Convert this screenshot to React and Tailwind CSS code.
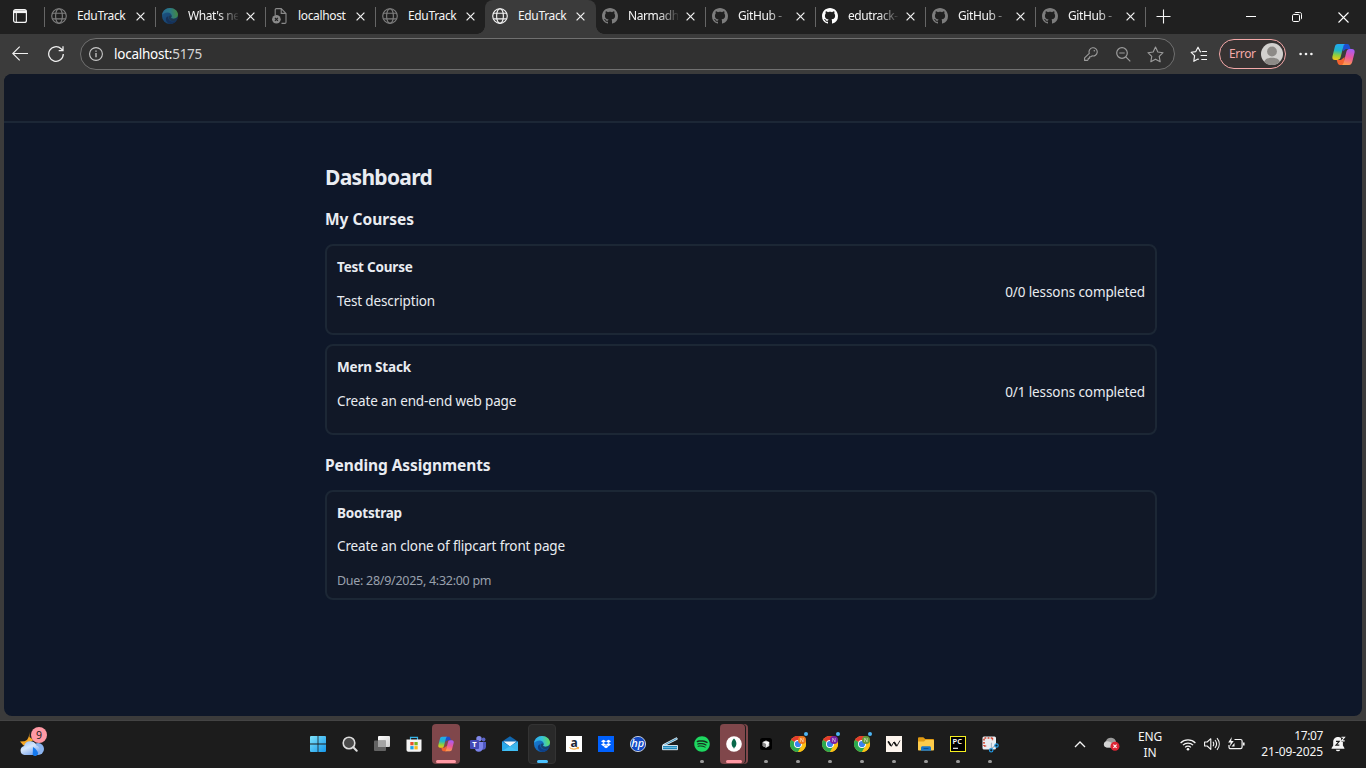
import React from "react";
import { FaDropbox, FaSpotify } from "react-icons/fa";

/* ---------- browser icons ---------- */

const Globe = ({ dim }) => (
  <svg width="16" height="16" viewBox="0 0 16 16" fill="none" stroke={dim ? "#7d7d7d" : "#f2f2f2"} strokeWidth="1.15">
    <circle cx="8" cy="8" r="7.3" />
    <ellipse cx="8" cy="8" rx="3.4" ry="7.3" />
    <path d="M1.3 5.2h13.4M1.3 10.8h13.4" />
  </svg>
);

const Github = ({ dim }) => (
  <svg width="16" height="16" viewBox="0 0 16 16" fill={dim ? "#7d7d7d" : "#ffffff"}>
    <path d="M8 0c4.42 0 8 3.58 8 8a8.013 8.013 0 0 1-5.45 7.59c-.4.08-.55-.17-.55-.38 0-.27.01-1.13.01-2.2 0-.75-.25-1.23-.54-1.48 1.78-.2 3.65-.88 3.65-3.95 0-.88-.31-1.59-.82-2.15.08-.2.36-1.02-.08-2.12 0 0-.67-.22-2.2.82-.64-.18-1.32-.27-2-.27-.68 0-1.36.09-2 .27-1.53-1.03-2.2-.82-2.2-.82-.44 1.1-.16 1.92-.08 2.12-.51.56-.82 1.28-.82 2.15 0 3.06 1.86 3.75 3.64 3.95-.23.2-.44.55-.51 1.07-.46.21-1.61.55-2.33-.66-.15-.24-.6-.83-1.23-.82-.67.01-.27.38.01.53.34.19.73.9.82 1.13.16.45.68 1.31 2.69.94 0 .67.01 1.3.01 1.49 0 .21-.15.45-.55.38A7.995 7.995 0 0 1 0 8c0-4.42 3.58-8 8-8Z" />
  </svg>
);

const Edge = ({ id, dim }) => (
  <svg width="16" height="16" viewBox="0 0 16 16" opacity={dim ? 0.55 : 1}>
    <defs>
      <linearGradient id={id + "a"} x1="0" y1="0.3" x2="1" y2="0.2">
        <stop offset="0" stopColor="#2ea8ee" />
        <stop offset="0.5" stopColor="#35c1d8" />
        <stop offset="1" stopColor="#66e04f" />
      </linearGradient>
      <linearGradient id={id + "b"} x1="0" y1="0" x2="1" y2="1">
        <stop offset="0" stopColor="#1b86dc" />
        <stop offset="1" stopColor="#0c4d9c" />
      </linearGradient>
    </defs>
    <circle cx="8" cy="8" r="8" fill={"url(#" + id + "b)"} />
    <path d="M0 7.4C.4 3.200 3.800 0 8 0c4.600 0 8 3.200 8 6.600 0 2.500-1.900 4.100-4.300 4.100-1.800 0-2.700-.7-2.700-1.100 0-.4.7-.6.700-1.700C9.700 6 7.800 4.600 5.600 4.600 2.800 4.600.5 6 0 7.400Z" fill={"url(#" + id + "a)"} />
    <path d="M6.200 8.200c-.6 3 1.600 5.400 4.800 5.400 1.500 0 3-.6 3.900-1.500-.8 1.700-3 3.600-6 3.800-3-.2-5-2.500-5-5 0-1.300.900-2.300 2.300-2.700Z" fill="#0e3f86" />
    <path d="M9.700 7.700c.1 1.100-.7 1.500-.7 1.900 0 .4.900 1.100 2.700 1.100 1.700 0 3.200-.8 3.900-2-.1 1.300-.4 2.200-.9 3-1 .9-2.300 1.300-3.600 1.300-2.900 0-4.800-2-4.400-4.500.6-.9 1.900-1.300 3-.8Z" fill={dim ? "#24384a" : "#1c2b3a"} opacity="0.55" />
  </svg>
);

const BrokenPage = () => (
  <svg width="16" height="16" viewBox="0 0 16 16" fill="none" stroke="#8a8a8a" strokeWidth="1.1">
    <path d="M3.200 7V1.700C3.200 1 3.700.6 4.300.6h4.900L14 5.400v8.900c0 .7-.5 1.100-1.100 1.100H9.500M9.200.6v4.800H14" />
    <circle cx="4.400" cy="11.300" r="4.300" fill="#8a8a8a" stroke="none" />
    <path d="m2.900 9.800 3 3m0-3-3 3" stroke="#202020" strokeWidth="1.200" />
  </svg>
);

const Close = () => (
  <svg width="9" height="9" viewBox="0 0 9 9" stroke="#f0f0f0" strokeWidth="1.250">
    <path d="m.6.6 7.800 7.800m0-7.800L.6 8.400" />
  </svg>
);

const Copilot = ({ id, size }) => (
  <svg width={size} height={size} viewBox="0 0 22 22">
    <defs>
      <linearGradient id={id + "l"} x1="0.4" y1="0" x2="0.3" y2="1">
        <stop offset="0" stopColor="#22a9f2" />
        <stop offset="0.4" stopColor="#20b5c8" />
        <stop offset="0.7" stopColor="#8fcf3c" />
        <stop offset="1" stopColor="#f5c518" />
      </linearGradient>
      <linearGradient id={id + "r"} x1="0.6" y1="0" x2="0.4" y2="1">
        <stop offset="0" stopColor="#a65cf5" />
        <stop offset="0.5" stopColor="#e9569f" />
        <stop offset="1" stopColor="#ff9a4a" />
      </linearGradient>
    </defs>
    <path d="M10 1h4.600c1.300 0 1.900.9 2.300 2l.8 2.800h-4.400L10.500 8Z" fill="#1d4fd0" />
    <path d="M12 21H7.600c-1.300 0-2-.8-2.300-2l-.8-2.800h4L12 13.500Z" fill="#f2622e" />
    <path d="M5.700 1h6.800c-1 .4-1.400 1.300-1.700 2.500L8.400 13c-.5 2-1.200 3.200-3.200 3.200H3c-2 0-3-1.200-2.600-3.400L2.600 4C3.100 2 3.900 1 5.700 1Z" fill={"url(#" + id + "l)"} />
    <path d="M16.300 21H9.500c1-.4 1.400-1.300 1.700-2.500L13.600 9c.5-2 1.200-3.200 3.200-3.200H19c2 0 3 1.200 2.600 3.400L19.400 18c-.5 2-1.300 3-3.100 3Z" fill={"url(#" + id + "r)"} />
  </svg>
);

const tabs = [
  { icon: <Globe dim />, title: "EduTrack" },
  { icon: <Edge id="et" dim />, title: "What's ne", fade: true },
  { icon: <BrokenPage />, title: "localhost" },
  { icon: <Globe dim />, title: "EduTrack" },
  { icon: <Globe />, title: "EduTrack", active: true },
  { icon: <Github dim />, title: "Narmadh", fade: true },
  { icon: <Github dim />, title: "GitHub -", fade: true },
  { icon: <Github />, title: "edutrack-", fade: true },
  { icon: <Github dim />, title: "GitHub -", fade: true },
  { icon: <Github dim />, title: "GitHub -", fade: true },
];

function Tab({ tab, line, first }) {
  const box = tab.active ? "-ml-px w-[111px] rounded-t-lg bg-[#3b3b3b] pl-[7px]" : first ? "w-[111px] pl-[6px]" : "w-[110px] pl-[6px]";
  return (
    <div className={"relative flex h-[34px] shrink-0 items-center pb-[2px] " + box}>
      <span className="flex w-4 shrink-0">{tab.icon}</span>
      <span
        className={
          "ml-[10px] w-[50px] text-[12px] leading-[18px] whitespace-nowrap text-[#f5f5f5] " +
          (tab.fade ? "tracking-[-0.4px] [mask-image:linear-gradient(to_right,black_60%,transparent_104%)]" : "tracking-[-0.35px]")
        }
      >
        {tab.title}
      </span>
      <span className={"flex pt-px " + (first ? "ml-[9px]" : "ml-2")}><Close /></span>
      {line && <span className="absolute top-[7px] right-0 h-5 w-px bg-[#666666]" />}
      {tab.active && (
        <>
          <span className="absolute bottom-0 -left-2 h-2 w-2 bg-[radial-gradient(circle_at_0_0,transparent_7.500px,#3b3b3b_8px)]" />
          <span className="absolute -right-2 bottom-0 h-2 w-2 bg-[radial-gradient(circle_at_100%_0,transparent_7.500px,#3b3b3b_8px)]" />
        </>
      )}
    </div>
  );
}

function TabStrip() {
  return (
    <div className="flex h-[34px] shrink-0 bg-[#202020]">
      <div className="relative flex w-[45px] items-center justify-center pr-[5px] pb-[2px]">
        <svg width="14" height="14" viewBox="0 0 14 14" fill="none" stroke="#f5f5f5" strokeWidth="1.200">
          <rect x="0.600" y="0.600" width="12.800" height="12.800" rx="2" />
          <path d="M1 2.700h12" strokeWidth="2.800" />
          <path d="M3.300 4v9" strokeWidth="1" />
        </svg>
        <span className="absolute top-[7px] right-0 h-5 w-px bg-[#666666]" />
      </div>
      {tabs.map((t, i) => (
        <Tab key={i} tab={t} first={i === 0} line={i !== 3 && i !== 4} />
      ))}
      <div className="flex w-10 items-center pb-[2px] pl-[10px]">
        <svg width="15" height="15" viewBox="0 0 15 15" stroke="#f5f5f5" strokeWidth="1.100"><path d="M7.500.5v14M.5 7.500h14" /></svg>
      </div>
      <div className="ml-auto flex">
        <div className="flex w-[46px] items-center justify-center">
          <svg width="10" height="10" viewBox="0 0 10 10" stroke="#fff"><path d="M0 4.500h10" /></svg>
        </div>
        <div className="flex w-[46px] items-center justify-center">
          <svg width="10" height="10" viewBox="0 0 10 10" fill="none" stroke="#fff">
            <rect x="0.500" y="2.500" width="7" height="7" rx="1.200" />
            <path d="M2.500 1.200c.3-.5.600-.7 1.200-.7h4c1.200 0 1.800.6 1.800 1.800v4c0 .6-.2.900-.7 1.200" />
          </svg>
        </div>
        <div className="flex w-[46px] items-center justify-center">
          <svg width="11" height="11" viewBox="0 0 11 11" stroke="#fff" strokeWidth="1.100"><path d="m.5.5 10 10m0-10-10 10" /></svg>
        </div>
      </div>
    </div>
  );
}

const starPath = "m8 1 2.200 4.600 4.900.7-3.600 3.500.9 5L8 12.400l-4.400 2.400.9-5L.9 6.300l4.900-.7Z";

function Toolbar() {
  return (
    <div className="flex h-10 shrink-0 items-center bg-[#3b3b3b]">
      <svg className="ml-3" width="16" height="16" viewBox="0 0 16 16" fill="none" stroke="#f0f0f0" strokeWidth="1.150">
        <path d="M16 7.500H.8M7.700.7.8 7.500l6.900 6.800" />
      </svg>
      <svg className="ml-5" width="16" height="16" viewBox="0 0 16 16" fill="none" stroke="#f0f0f0" strokeWidth="1.250">
        <path d="M15.300 8a7.300 7.300 0 1 1-2.200-5.200L14.800 4.400M15 .3v4.300h-4.300" />
      </svg>
      <div className="ml-4 flex h-8 w-[1095px] items-center rounded-full border border-[#707070] bg-[#313131] pl-2 pr-[10px]">
        <svg width="14" height="14" viewBox="0 0 14 14" fill="none" stroke="#c8c8c8" strokeWidth="1.100">
          <circle cx="7" cy="7" r="6.400" />
          <path d="M7 6v4.300M7 3.500v1.300" strokeWidth="1.300" />
        </svg>
        <span className="ml-[11px] text-[13.500px] leading-5 tracking-[-0.25px] text-white">
          localhost:<span className="text-[#d4d4d4]">5175</span>
        </span>
        <svg className="ml-auto" width="14" height="14" viewBox="0 0 14 14" fill="none" stroke="#9c9c9c" strokeWidth="1.100">
          <path d="M5.300 6.300A4.100 4.100 0 1 1 8 8.800l-1.200 1H5.600v1.500H4.200v1.400L3.500 13.400H.6v-2.500Z" strokeLinejoin="round" />
          <circle cx="10.300" cy="3.800" r="0.800" fill="#9c9c9c" stroke="none" />
        </svg>
        <svg className="ml-[18px]" width="15" height="15" viewBox="0 0 15 15" fill="none" stroke="#9c9c9c" strokeWidth="1.200">
          <circle cx="6" cy="6" r="5.300" />
          <path d="m9.800 9.800 4.500 4.500M3.300 6h5.400" />
        </svg>
        <svg className="ml-4" width="17" height="17" viewBox="0 0 16 16" fill="none" stroke="#9c9c9c" strokeWidth="1.050" strokeLinejoin="round">
          <path d={starPath} />
        </svg>
      </div>
      <svg className="ml-[15px]" width="18" height="17" viewBox="0 0 18 17" fill="none" stroke="#f5f5f5" strokeWidth="1.150" strokeLinejoin="round">
        <path d="M11 5.900 10.200 5.600 8 1.200 5.800 5.600l-4.600.7 3.400 3.300-.8 5.700L8 13l.8.4M11.800 5.500H17M10.600 9.500H17M11.300 13.500H17" />
      </svg>
      <div className="ml-[11px] flex h-[30px] w-[67px] items-center rounded-full border border-[#f5a9a9] bg-[#363232] pl-[9px]">
        <span className="text-[12px] leading-4 tracking-[-0.4px] text-[#f5aaa8]">Error</span>
        <svg className="ml-[5px] shrink-0" width="22" height="22" viewBox="0 0 22 22">
          <clipPath id="avatar"><circle cx="11" cy="11" r="11" /></clipPath>
          <g clipPath="url(#avatar)">
            <rect width="22" height="22" fill="#d2d0ce" />
            <circle cx="11" cy="8.500" r="4.900" fill="#8d8a87" />
            <path d="M2.500 21c.5-4.200 3.200-6.200 8.500-6.200s8 2 8.500 6.200l-3 2H5Z" fill="#8d8a87" />
          </g>
        </svg>
      </div>
      <svg className="ml-[13px]" width="14" height="4" viewBox="0 0 14 4" fill="#f5f5f5">
        <circle cx="1.600" cy="2" r="1.300" /><circle cx="7" cy="2" r="1.300" /><circle cx="12.400" cy="2" r="1.300" />
      </svg>
      <span className="ml-[19px] flex"><Copilot id="ct" size={23} /></span>
    </div>
  );
}

/* ---------- page ---------- */

const courses = [
  { title: "Test Course", text: "Test description", done: "0/0 lessons completed" },
  { title: "Mern Stack", text: "Create an end-end web page", done: "0/1 lessons completed" },
];

function Page() {
  return (
    <div className="mx-1 flex h-[642px] shrink-0 flex-col overflow-hidden rounded-lg bg-[#0e1729] text-[#e9ecf1]">
      <div className="h-[49px] shrink-0 border-b-2 border-[#1c2736] bg-[#111827]" />
      <main className="ml-[321px] w-[832px] pt-[38px]">
        <h2 className="text-[21px] leading-[32px] font-bold tracking-[-0.7px]">Dashboard</h2>
        <h3 className="mt-[14px] text-[15.500px] leading-6 font-bold tracking-[0px]">My Courses</h3>
        <div className="mt-[13px] flex flex-col gap-[9px]">
          {courses.map((c) => (
            <div key={c.title} className="flex h-[91px] items-center justify-between rounded-lg border-2 border-[#1c2735] bg-[#111827] px-[10px]">
              <div className="flex h-full flex-col pt-[11px]">
                <span className="text-[13.500px] leading-5 font-bold tracking-[-0.2px]">{c.title}</span>
                <span className="mt-[14px] text-[13.500px] leading-5 tracking-[-0.130px]">{c.text}</span>
              </div>
              <span className="pt-[5px] text-[13.500px] leading-5 tracking-[-0.1px]">{c.done}</span>
            </div>
          ))}
        </div>
        <h3 className="mt-[18px] text-[15.500px] leading-6 font-bold tracking-[-0.080px]">Pending Assignments</h3>
        <div className="mt-[13px] flex h-[110px] flex-col rounded-lg border-2 border-[#1c2735] bg-[#111827] px-[10px] pt-[11px]">
          <span className="text-[13.500px] leading-5 font-bold tracking-[-0.2px]">Bootstrap</span>
          <span className="mt-[13px] text-[13.500px] leading-5 tracking-[-0.130px]">Create an clone of flipcart front page</span>
          <span className="mt-[15px] text-[12.500px] leading-5 tracking-[-0.280px] text-[#9aa1ad]">Due: 28/9/2025, 4:32:00 pm</span>
        </div>
      </main>
    </div>
  );
}

/* ---------- taskbar ---------- */

const Chrome = ({ badge }) => (
  <svg width="20" height="20" viewBox="-2 -4 20 20" className="-mt-1 overflow-visible">
    <circle cx="8" cy="8" r="8" fill="#fbc116" />
    <path d="M8 8 1.070 4A8 8 0 0 1 14.930 4Z" fill="#e33b2e" />
    <path d="M8 8 1.070 4A8 8 0 0 0 8 16l3.500-6Z" fill="#2da94f" />
    <path d="M8 4h6.930A8 8 0 0 1 8 16l3.500-6Z" fill="#fbc116" />
    <circle cx="8" cy="8" r="4" fill="#fff" />
    <circle cx="8" cy="8" r="3.100" fill="#3b82f0" />
    <circle cx="12" cy="4" r="4" fill={badge} />
    <text x="12" y="5.800" textAnchor="middle" fontSize="5" fill="#fff" opacity="0.850">N</text>
    <circle cx="16" cy="-2" r="2" fill="#4cb5f5" />
  </svg>
);

const icons = {
  start: (
    <svg width="16" height="16" viewBox="0 0 16 16">
      <defs><linearGradient id="win" x1="0" y1="0" x2="1" y2="1"><stop offset="0" stopColor="#7fe3fb" /><stop offset="1" stopColor="#1597ea" /></linearGradient></defs>
      <path d="M1 0h6.600v7.600H0V1a1 1 0 0 1 1-1Zm7.400 0H15a1 1 0 0 1 1 1v6.600H8.400ZM0 8.400h7.600V16H1a1 1 0 0 1-1-1Zm8.400 0H16V15a1 1 0 0 1-1 1H8.400Z" fill="url(#win)" />
    </svg>
  ),
  search: (
    <svg width="16" height="16" viewBox="0 0 16 16" fill="none">
      <circle cx="7" cy="7" r="5.800" fill="#4a4a4a" stroke="#dcdcdc" strokeWidth="1.600" />
      <path d="m11.300 11.300 3.400 3.400" stroke="#dcdcdc" strokeWidth="2" strokeLinecap="round" />
    </svg>
  ),
  tasks: (
    <svg width="16" height="16" viewBox="0 0 16 16">
      <defs><linearGradient id="tv" x1="0" y1="0" x2="1" y2="1"><stop offset="0" stopColor="#ffffff" /><stop offset="1" stopColor="#cfcfcf" /></linearGradient></defs>
      <rect x="4" y="0" width="12" height="11" rx="1" fill="url(#tv)" />
      <rect x="0" y="4.500" width="12" height="10.500" rx="1" fill="#6b6b6b" opacity="0.900" />
      <path d="M4 4.500h8V11H4Z" fill="#a4a4a4" />
    </svg>
  ),
  store: (
    <svg width="16" height="16" viewBox="0 0 16 16">
      <path d="M4.500 4V1.300h7V4" fill="none" stroke="#36b4e8" strokeWidth="1.200" />
      <path d="M.5 3.500h15V14a1.800 1.800 0 0 1-1.800 1.800H2.300A1.800 1.800 0 0 1 .5 14Z" fill="#f4f4f4" />
      <path d="M4.300 6h3.300v3.300H4.300Z" fill="#e8502b" /><path d="M8.400 6h3.300v3.300H8.400Z" fill="#79b520" />
      <path d="M4.300 10.100h3.300v3.300H4.300Z" fill="#1ba1e8" /><path d="M8.400 10.100h3.300v3.300H8.400Z" fill="#f9b81a" />
    </svg>
  ),
  copilot: <Copilot id="cb" size={16} />,
  teams: (
    <svg width="16" height="16" viewBox="0 0 16 16">
      <circle cx="13.600" cy="3.500" r="1.900" fill="#5b63c8" />
      <path d="M10 6h6v4.500c0 2-1.200 3.300-3.300 3.300H10Z" fill="#5059c2" />
      <circle cx="9" cy="2.800" r="2.700" fill="#8088ea" />
      <path d="M5 6h8v5c0 2.800-1.700 4.800-4.300 4.800S5 14 5 12Z" fill="#7b83eb" />
      <rect x="0" y="4" width="9" height="9" rx="1" fill="#4349b5" />
      <text x="4.500" y="11" textAnchor="middle" fontSize="7.500" fontWeight="700" fill="#fff">T</text>
    </svg>
  ),
  mail: (
    <svg width="16" height="16" viewBox="0 0 16 16">
      <path d="M0 5.500 8 .3l8 5.200V15H0Z" fill="#1066ad" />
      <path d="M1.500 5.500h13L8 10.500Z" fill="#f0f6fb" />
      <path d="M0 5.500 8 10.500l8 4.500H0Z" fill="#29a8ea" />
      <path d="M16 5.500 8 10.300 0 15h16Z" fill="#45c4f7" opacity="0.850" />
    </svg>
  ),
  edge: <Edge id="eb" />,
  amazon: (
    <svg width="16" height="16" viewBox="0 0 16 16">
      <rect width="16" height="16" fill="#fff" />
      <text x="8" y="10.500" textAnchor="middle" fontSize="12" fontWeight="700" fill="#1e2836">a</text>
      <path d="M3.500 11.600c2.600 2 6.200 2 8.800.2M10.700 11.500l1.900-.1-.6 1.800" fill="none" stroke="#f59d20" strokeWidth="1" />
    </svg>
  ),
  dropbox: <span className="flex h-4 w-4 items-center justify-center bg-[#0061fe]"><FaDropbox size={10} color="#fff" /></span>,
  hp: (
    <svg width="16" height="16" viewBox="0 0 16 16">
      <circle cx="8" cy="8" r="7.600" fill="#1249c4" stroke="#e9effa" strokeWidth="0.800" />
      <text x="7.800" y="11.300" textAnchor="middle" fontSize="11" fontStyle="italic" fontWeight="500" fill="#fff">hp</text>
    </svg>
  ),
  scan: (
    <svg width="16" height="16" viewBox="0 0 16 16">
      <path d="M.8 8.800 14.600 1.700l.8 1.500L4 8.900Z" fill="#2f8fc0" stroke="#e4f1f8" strokeWidth="0.900" />
      <path d="M.5 9.500h15v4.200H.5Z" fill="#2189bd" stroke="#e4f1f8" strokeWidth="0.900" />
      <path d="M1 11.500h14" stroke="#8fcbe6" strokeWidth="0.700" />
    </svg>
  ),
  spotify: <span className="flex rounded-full bg-[#16301e]"><FaSpotify size={16} color="#1ed760" /></span>,
  mongo: (
    <svg width="16" height="16" viewBox="0 0 16 16">
      <circle cx="8" cy="8" r="7.800" fill="#fff" />
      <path d="M8 2.500c1.900 1.900 2.400 3.500 2.400 5.200 0 1.900-1 3.300-2.100 4.100L8 13.500l-.3-1.700c-1.100-.8-2.100-2.200-2.100-4.100 0-1.700.5-3.300 2.400-5.200Z" fill="#08684a" />
    </svg>
  ),
  cursor: (
    <svg width="12" height="12" viewBox="0 0 12 12">
      <rect width="12" height="12" rx="2.500" fill="#000" />
      <path d="m6 2.500 3.300 1.600v4L6 9.700 2.700 8.100v-4Z" fill="#d4d4d4" />
      <path d="M2.900 4.200 9.200 4 6.300 9.400V6Z" fill="#fff" /><path d="M2.700 4.300 6 6v3.500L2.700 8Z" fill="#8a8a8a" />
    </svg>
  ),
  chromeA: <Chrome badge="#f07a1c" />,
  chromeB: <Chrome badge="#7720a5" />,
  chromeC: <Chrome badge="#659b38" />,
  wave: (
    <svg width="16" height="16" viewBox="0 0 16 16">
      <rect width="16" height="16" fill="#fdf5ee" />
      <path d="m2 5 3.400 5.300L7.800 6l3 4.200L14 4.500" fill="none" stroke="#111" strokeWidth="0.900" />
      <path d="m2.200 5.500 2.800 4.300M8 6l2.600 4" stroke="#111" strokeWidth="1.700" />
    </svg>
  ),
  files: (
    <svg width="16" height="16" viewBox="0 0 16 16">
      <path d="M0 2.500C0 1.700.5 1.200 1.300 1.200h4L7.300 3H15c.6 0 1 .4 1 1v4H0Z" fill="#e09a13" />
      <path d="M0 5.500h6L7.500 4H15c.6 0 1 .4 1 1v8.500c0 .6-.4 1-1 1H1c-.6 0-1-.4-1-1Z" fill="#fccb4b" />
      <path d="M3 14.800v-3c0-1 .6-1.600 1.600-1.600h6.800c1 0 1.600.6 1.600 1.600v3Z" fill="#1877c9" />
      <path d="M5.500 12.500h5" stroke="#0b4f91" />
    </svg>
  ),
  pycharm: (
    <svg width="16" height="16" viewBox="0 0 16 16">
      <rect x="0.500" y="0.500" width="15" height="15" fill="#000" stroke="#f5ee20" />
      <text x="2.600" y="8.300" fontSize="7.500" fontWeight="600" fill="#fff">PC</text>
      <path d="M3 12.300h5" stroke="#fff" strokeWidth="1.100" />
    </svg>
  ),
  snip: (
    <svg width="17" height="17" viewBox="0 0 17 17" className="overflow-visible">
      <rect x="0.500" y="0.500" width="13.500" height="13" rx="1.500" fill="#e9edf2" />
      <path d="M10.500 2H2v8" fill="none" stroke="#d1412c" strokeWidth="1.600" strokeDasharray="1.800 1.300" />
      <path d="M10.500 2v3M2 10h3" fill="none" stroke="#d1412c" strokeWidth="1.400" strokeDasharray="1.800 1" />
      <path d="m9.500 6.800-.2 5.500M9 12.800l5-3.500" stroke="#a8b5c2" strokeWidth="1.200" />
      <circle cx="9.200" cy="14.300" r="1.700" fill="#1c1c1c" stroke="#2199e4" strokeWidth="1.200" />
      <circle cx="14.500" cy="9.500" r="1.700" fill="#1c1c1c" stroke="#2199e4" strokeWidth="1.200" />
    </svg>
  ),
};

const apps = [
  ["start"], ["search"], ["tasks"], ["store"], ["copilot", "alert"], ["teams"], ["mail"], ["edge", "active"], ["amazon"], ["dropbox"], ["hp"],
  ["scan"], ["spotify", "dot"], ["mongo", "stack"], ["cursor", "dot"], ["chromeA", "dot"], ["chromeB", "dot"], ["chromeC", "dot"], ["wave", "dot"],
  ["files", "dot"], ["pycharm", "dot"], ["snip", "dot"],
];

function AppButton({ name, state }) {
  const tile = state === "alert" ? "bg-[#80474b]" : state === "active" ? "border border-[#333333] bg-[#292929]" : "";
  return (
    <div className="flex w-8 justify-center">
      <div className={"relative flex h-10 w-7 items-center justify-center rounded-[4px] " + tile}>
        {state === "stack" && (
          <>
            <span className="absolute inset-y-0 left-0 w-[28px] rounded-[4px] bg-[#80474b]" />
            <span className="absolute inset-y-0 left-0 w-[26px] rounded-[4px] bg-[#1c1c1c]" />
            <span className="absolute inset-y-0 left-0 w-[25px] rounded-[4px] bg-[#80474b]" />
          </>
        )}
        <span className="relative flex">{icons[name]}</span>
        {(state === "alert" || state === "stack") && <span className={"absolute bottom-px h-[3px] rounded-full bg-[#ff99a4] " + (state === "alert" ? "w-5" : "w-4")} />}
        {state === "active" && <span className="absolute bottom-0 h-[3px] w-[11px] rounded-full bg-[#4cc2ff]" />}
        {state === "dot" && <span className="absolute bottom-px h-[3px] w-1 rounded-full bg-[#9a9a9a]" />}
      </div>
    </div>
  );
}

function Taskbar() {
  return (
    <div className="flex h-[47px] shrink-0 items-start bg-[#1c1c1c] pt-[3px] text-[#f5f5f5]">
      <div className="ml-[19px] flex w-[283px] pt-[3px]">
        <div className="relative flex pt-[5px]">
          <svg width="26" height="25" viewBox="0 0 26 25">
            <defs><linearGradient id="cl" x1="0" y1="0" x2="0.6" y2="1"><stop offset="0" stopColor="#8dbbf8" /><stop offset="0.5" stopColor="#d6e6fb" /><stop offset="1" stopColor="#7ba7ee" /></linearGradient></defs>
            <path d="M10.500 0v5l4 3-6 4-4 1.500L1 9.500l4.500-.3c3-.5 4.700-4 5-9.200Z" fill="#f5a623" />
            <circle cx="19" cy="17" r="6" fill="#8bb4ef" />
            <path d="M5.500 23A4.600 4.600 0 0 1 5 14a6.500 6.500 0 0 1 12.300-.5c2.600.6 4 3 3.500 5.500-.4 2.400-2.300 4-4.800 4Z" fill="url(#cl)" />
            <path d="M14 15c3 2 5 4.500 5 6.300a2.900 2.900 0 0 1-5.300 1.500Z" fill="#1379f0" />
          </svg>
          <span className="absolute top-0 left-3 flex h-4 w-4 items-center justify-center rounded-full bg-[#ff99a4] text-[10.500px] leading-4 text-[#1c1c1c]">9</span>
        </div>
      </div>
      <div className="flex">
        {apps.map(([name, state]) => (
          <AppButton key={name} name={name} state={state} />
        ))}
      </div>
      <div className="flex h-10 items-center">
        <svg className="ml-[68px]" width="12" height="7" viewBox="0 0 12 7" fill="none" stroke="#f5f5f5" strokeWidth="1.300"><path d="m1 6 5-5 5 5" /></svg>
        <svg className="ml-[17px]" width="17" height="14" viewBox="0 0 17 14">
          <path d="M4 10.500A3.500 3.500 0 0 1 3 4C4 1.500 6 .5 8.500.8c2.500.2 4 2 4.500 4l1.500 5.700Z" fill="#9b9b9b" />
          <path d="M3.500 10.500A3 3 0 0 1 2.500 4.800C5 3.800 7 4.500 10 7v3.500Z" fill="#d3d3d3" />
          <circle cx="12" cy="9.200" r="4.500" fill="#dd2534" />
          <path d="m10.400 7.600 3.200 3.200m0-3.200-3.200 3.200" stroke="#fff" strokeWidth="1.100" />
        </svg>
        <div className="ml-[13px] flex w-[34px] flex-col items-center pt-px text-[12px] leading-4 tracking-[-0.1px]">
          <span>ENG</span>
          <span>IN</span>
        </div>
        <svg className="ml-[13px]" width="16" height="13" viewBox="0 0 16 13" fill="none" stroke="#f5f5f5" strokeWidth="1.200">
          <path d="M.6 5a10.300 10.300 0 0 1 14.800 0M2.900 7.200a7.200 7.200 0 0 1 10.200 0M5.100 9.400a4.100 4.100 0 0 1 5.800 0" />
          <circle cx="8" cy="11.200" r="1.300" fill="#f5f5f5" stroke="none" />
        </svg>
        <svg className="ml-2" width="16" height="14" viewBox="0 0 16 14" fill="none" stroke="#f5f5f5" strokeWidth="1.100" strokeLinejoin="round">
          <path d="M.6 5v4h2.600l3.600 3.300V1.700L3.200 5ZM9 4.700c1 1.500 1 3.100 0 4.600M11 3c2 2.500 2 5.500 0 8M13 1.200c3 3.500 3 8.100 0 11.600" />
        </svg>
        <svg className="ml-2" width="17" height="14" viewBox="0 0 17 14" fill="none" stroke="#f5f5f5" strokeWidth="1.200">
          <path d="M6.500 2.500h6c1 0 1.600.6 1.600 1.600v6c0 1-.6 1.600-1.600 1.600H2.600c-1 0-1.600-.6-1.600-1.600V8" />
          <path d="M15.800 5.500v3" strokeWidth="1.600" />
          <path d="M3.800 0 .2 5.400h2.500L1.800 9.500l3.900-5.400H3.200Z" fill="#f5f5f5" stroke="none" />
          <path d="m3.500 9.500 3-3.500v3.500Z" fill="#f5f5f5" stroke="none" />
        </svg>
        <div className="ml-3 flex w-[66px] flex-col items-end text-[12px] leading-4 tracking-[-0.1px] whitespace-nowrap">
          <span className="tracking-[-0.4px]">17:07</span>
          <span>21-09-2025</span>
        </div>
        <svg className="ml-2" width="15" height="16" viewBox="0 0 15 16">
          <path d="M7 1C4 1 2.200 3.200 2.200 6v3.500L.6 12v.8h12.800V12l-1.500-2.500V6C11.900 3.200 10 1 7 1ZM4.800 13.700a2.300 2.300 0 0 0 4.400 0Z" fill="#f5f5f5" />
          <path d="M5 5.300h3.200L5 9.200h3.300" fill="none" stroke="#1c1c1c" strokeWidth="1.200" />
          <path d="M9.800 0H15v6h-4.500Z" fill="#1c1c1c" />
          <path d="M10.500 1.300h3L10.500 4.900h3.200" fill="none" stroke="#f5f5f5" strokeWidth="1.100" />
        </svg>
      </div>
    </div>
  );
}

export default function App() {
  return (
    <div className="flex h-[768px] w-[1366px] flex-col overflow-hidden bg-[#3b3b3b] font-['Noto_Sans','Open_Sans',sans-serif]">
      <TabStrip />
      <Toolbar />
      <Page />
      <div className="h-[5px] shrink-0 border-b border-[#444444] bg-[#3b3b3b]" />
      <Taskbar />
    </div>
  );
}
